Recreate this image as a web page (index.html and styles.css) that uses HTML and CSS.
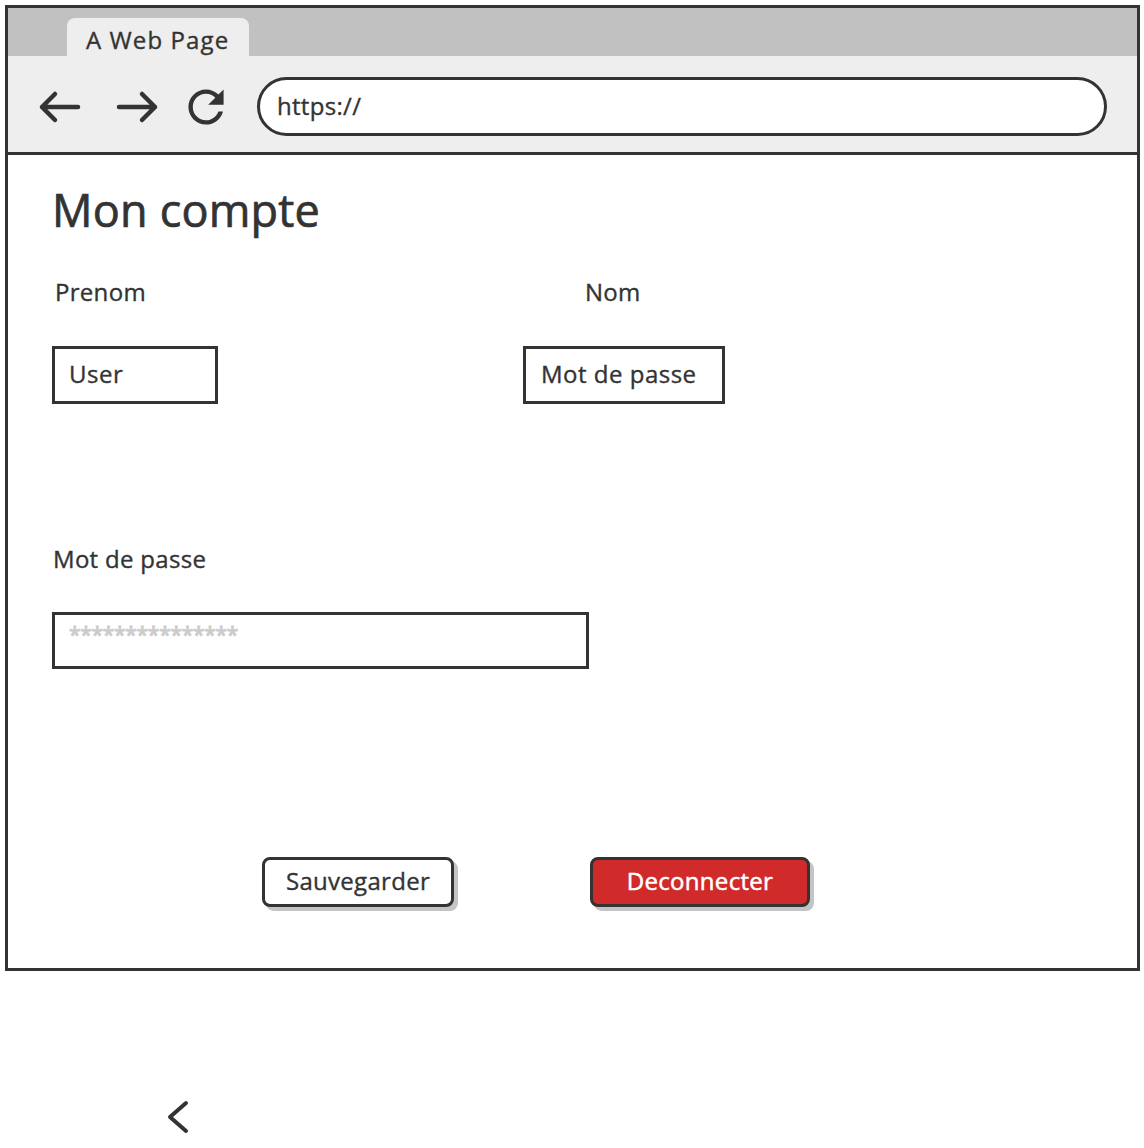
FILE: index.html
```html
<!DOCTYPE html>
<html lang="fr">
<head>
<meta charset="utf-8">
<title>Mon compte</title>
<link rel="stylesheet" href="styles.css">
</head>
<body>
<div class="window">
  <div class="tabbar">
    <div class="tab">A Web Page</div>
  </div>
  <div class="toolbar">
    <svg class="nav nav-back" width="44" height="40" viewBox="0 0 44 40" aria-hidden="true">
      <path d="M4 20 H40 M17 7 L4 20 L17 33" fill="none" stroke="#333" stroke-width="4.5" stroke-linecap="round" stroke-linejoin="round"/>
    </svg>
    <svg class="nav nav-fwd" width="44" height="40" viewBox="0 0 44 40" aria-hidden="true">
      <path d="M4 20 H40 M27 7 L40 20 L27 33" fill="none" stroke="#333" stroke-width="4.5" stroke-linecap="round" stroke-linejoin="round"/>
    </svg>
    <svg class="nav nav-reload" width="44" height="44" viewBox="2 2 20 20" aria-hidden="true">
      <path d="M17.65 6.35C16.2 4.9 14.21 4 12 4c-4.42 0-7.99 3.58-7.99 8s3.57 8 7.99 8c3.73 0 6.84-2.55 7.730-6h-2.08c-.82 2.33-3.04 4-5.65 4-3.31 0-6-2.69-6-6s2.69-6 6-6c1.66 0 3.14.69 4.22 1.78L13 11h7V4l-2.35 2.35z" fill="#333"/>
    </svg>
    <div class="url">https://</div>
  </div>
  <div class="content">
    <h1 class="title">Mon compte</h1>
    <div class="fields">
      <div class="label">Prenom</div>
      <div class="label label-nom">Nom</div>
      <div class="box box-user">User</div>
      <div class="box box-nom">Mot de passe</div>
    </div>
    <div class="label label-pass">Mot de passe</div>
    <div class="box box-pass"><span class="stars">***************</span></div>
    <div class="actions">
      <button class="btn btn-save">Sauvegarder</button>
      <button class="btn btn-logout">Deconnecter</button>
    </div>
  </div>
</div>
<svg class="chevron" width="28" height="38" viewBox="0 0 28 38" aria-hidden="true">
  <path d="M22 4 L6 18 L22 32" fill="none" stroke="#333" stroke-width="4" stroke-linecap="round" stroke-linejoin="round"/>
</svg>
</body>
</html>
```

FILE: styles.css
```css
* { box-sizing: border-box; }

body {
  margin: 0;
  background: #ffffff;
  font-family: "Open Sans", "Noto Sans", sans-serif;
  color: #333333;
  -webkit-text-stroke: 0.35px #333333;
}

.window {
  margin: 5px 0 0 5px;
  width: 1135px;
  border: 3px solid #333333;
  background: #ffffff;
}

.tabbar {
  height: 48px;
  background: #c1c1c1;
  padding: 10px 0 0 59px;
}

.tab {
  width: 182px;
  height: 38px;
  background: #eeeeee;
  border-radius: 8px 8px 0 0;
  padding: 6px 0 0 19px;
  font-size: 24px;
  line-height: 32px;
  letter-spacing: 1.1px;
}

.toolbar {
  height: 99px;
  background: #eeeeee;
  border-bottom: 3px solid #333333;
  display: flex;
  align-items: center;
  padding: 5px 0 0 30px;
}

.nav { display: block; flex: none; }
.nav-fwd { margin-left: 33px; }
.nav-reload { margin-left: 25px; }

.url {
  margin-left: 29px;
  width: 850px;
  height: 59px;
  border: 3px solid #333333;
  border-radius: 30px;
  background: #ffffff;
  display: flex;
  align-items: center;
  padding: 0 0 2px 17px;
  font-size: 24px;
  letter-spacing: 0.3px;
}

.content {
  padding: 28px 0 61px 44px;
}

.title {
  margin: 0;
  font-size: 45px;
  line-height: 54px;
  font-weight: 400;
  letter-spacing: 0.2px;
  -webkit-text-stroke: 0.7px #333333;
}

.fields {
  margin-top: 40px;
  display: grid;
  grid-template-columns: 471px auto;
  row-gap: 39px;
  justify-items: start;
}

.label {
  font-size: 24px;
  line-height: 30px;
  padding-left: 3px;
  letter-spacing: 0.3px;
}

.label-nom { padding-left: 62px; }

.box {
  border: 3px solid #333333;
  background: #ffffff;
  height: 58px;
  display: flex;
  align-items: center;
  padding: 0 0 3px 14px;
  font-size: 24px;
  letter-spacing: 0.5px;
}

.box-user { width: 166px; }
.box-nom { width: 202px; padding-left: 15px; }

.label-pass {
  margin-top: 140px;
  padding-left: 1px;
}

.box-pass {
  margin-top: 38px;
  width: 537px;
  height: 57px;
  align-items: flex-start;
  padding: 9px 0 0 14px;
}

.stars {
  font-size: 21px;
  line-height: 20px;
  color: #cccccc;
  letter-spacing: -0.3px;
  -webkit-text-stroke: 1px #cccccc;
}

.actions {
  margin-top: 188px;
  display: flex;
  gap: 136px;
  padding-left: 210px;
}

.btn {
  height: 50px;
  border: 3px solid #333333;
  border-radius: 8px;
  font-family: "Open Sans", "Noto Sans", sans-serif;
  font-size: 24px;
  letter-spacing: 0.3px;
  box-shadow: 4px 4px 0 #c4c4c4;
  padding: 0 0 3px 0;
  cursor: pointer;
}

.btn-save {
  width: 192px;
  background: #ffffff;
  color: #333333;
  -webkit-text-stroke: 0.35px #333333;
}

.btn-logout {
  width: 220px;
  background: #d02a2a;
  color: #ffffff;
  -webkit-text-stroke: 0.5px #ffffff;
}

.chevron {
  display: block;
  margin: 128px 0 0 164px;
}
```
